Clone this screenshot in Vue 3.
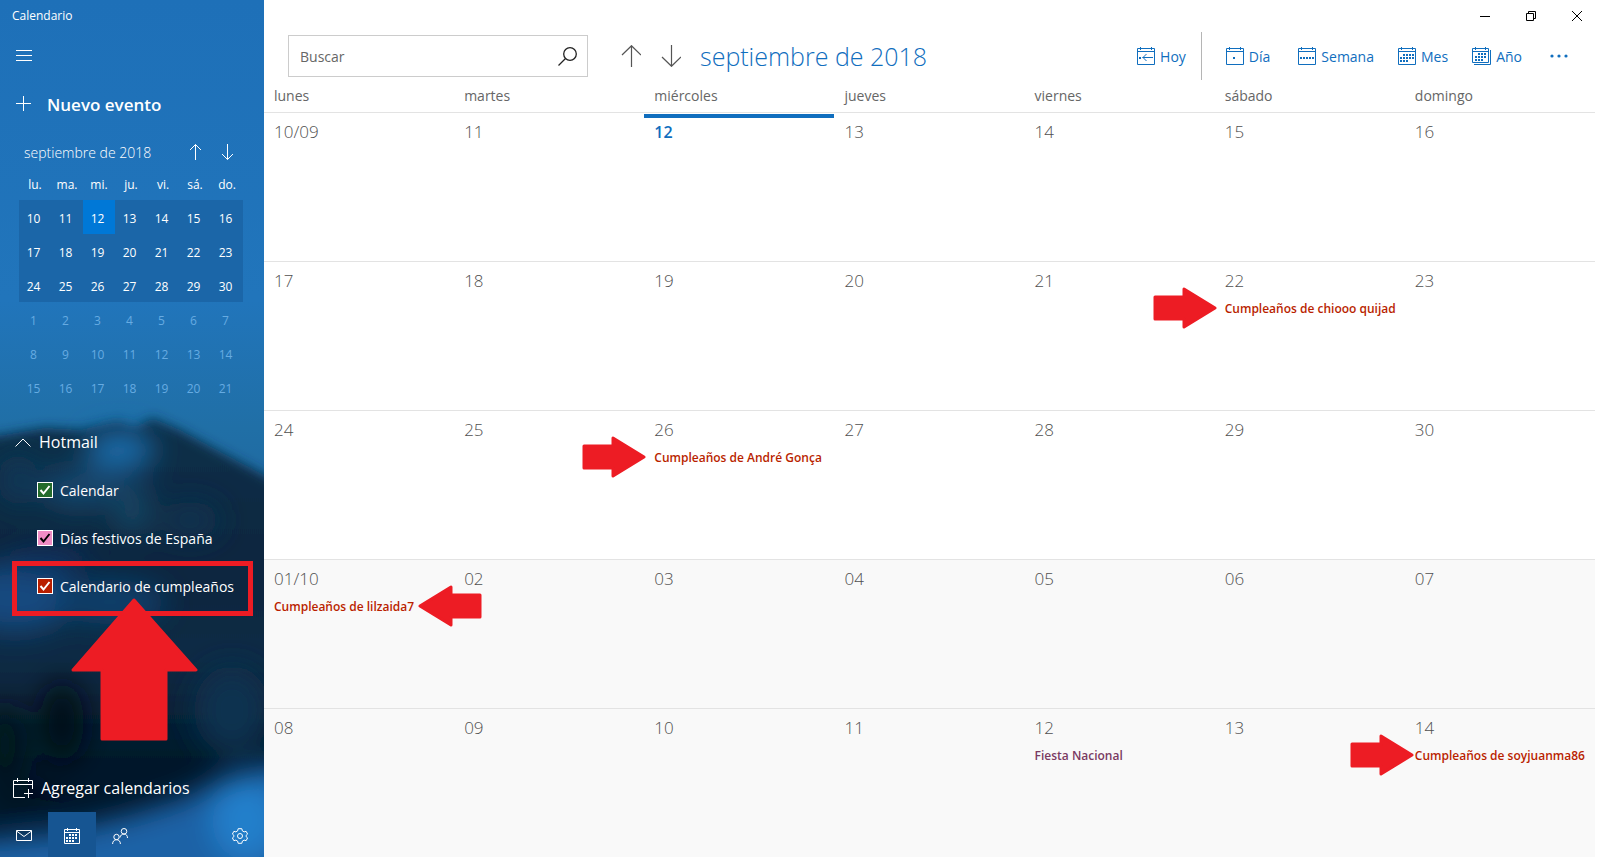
<script setup>
import { ref, computed } from "vue"

const search = ref("")
const activeView = ref("mes")

const weekdays = ["lunes", "martes", "miércoles", "jueves", "viernes", "sábado", "domingo"]
const shortWeekdays = ["lu.", "ma.", "mi.", "ju.", "vi.", "sá.", "do."]

const miniWeeks = [
  [10, 11, 12, 13, 14, 15, 16],
  [17, 18, 19, 20, 21, 22, 23],
  [24, 25, 26, 27, 28, 29, 30],
  [1, 2, 3, 4, 5, 6, 7],
  [8, 9, 10, 11, 12, 13, 14],
  [15, 16, 17, 18, 19, 20, 21]
]

const calendars = ref([
  { id: "calendar", name: "Calendar", color: "green", checked: true },
  { id: "holidays", name: "Días festivos de España", color: "pink", checked: true },
  { id: "birthdays", name: "Calendario de cumpleaños", color: "red", checked: true, marked: true }
])

const weeks = [
  ["10/09", "11", "12", "13", "14", "15", "16"],
  ["17", "18", "19", "20", "21", "22", "23"],
  ["24", "25", "26", "27", "28", "29", "30"],
  ["01/10", "02", "03", "04", "05", "06", "07"],
  ["08", "09", "10", "11", "12", "13", "14"]
]

const events = [
  { week: 1, day: 5, calendar: "birthdays", title: "Cumpleaños de chiooo quijad", arrow: "before" },
  { week: 2, day: 2, calendar: "birthdays", title: "Cumpleaños de André Gonça", arrow: "before" },
  { week: 3, day: 0, calendar: "birthdays", title: "Cumpleaños de lilzaida7", arrow: "after" },
  { week: 4, day: 4, calendar: "holidays", title: "Fiesta Nacional" },
  { week: 4, day: 6, calendar: "birthdays", title: "Cumpleaños de soyjuanma86", arrow: "close" }
]

const views = [
  { id: "dia", name: "Día", dots: [[7, 10]] },
  { id: "semana", name: "Semana", dots: [[2, 10], [5, 10], [8, 10], [11, 10], [14, 10]] },
  {
    id: "mes",
    name: "Mes",
    dots: [[5, 7], [8, 7], [11, 7], [14, 7], [2, 10], [5, 10], [8, 10], [11, 10], [14, 10], [2, 13], [5, 13], [8, 13]]
  },
  {
    id: "anio",
    name: "Año",
    dots: [[6, 6], [9, 6], [12, 6], [3, 9], [6, 9], [9, 9], [12, 9], [3, 12], [6, 12], [9, 12]]
  }
]

const visibleEvents = computed(() => {
  const active = calendars.value.filter((c) => c.checked).map((c) => c.id)
  return events.filter((e) => active.includes(e.calendar))
})

function eventsFor(week, day) {
  return visibleEvents.value.filter((e) => e.week === week && e.day === day)
}
</script>

<template>
  <div class="app">
    <aside class="sidebar">
      <svg class="backdrop" viewBox="0 0 264 857" preserveAspectRatio="none" aria-hidden="true">
        <defs>
          <linearGradient id="sky" x1="0" y1="0" x2="0" y2="1">
            <stop offset="0" stop-color="#1e70b8" />
            <stop offset="0.35" stop-color="#2175bb" />
            <stop offset="0.5" stop-color="#206fa6" />
            <stop offset="0.6" stop-color="#2068a0" />
          </linearGradient>
          <linearGradient id="rock" gradientUnits="userSpaceOnUse" x1="0" y1="415" x2="0" y2="857">
            <stop offset="0" stop-color="#0c3049" />
            <stop offset="0.35" stop-color="#08263f" />
            <stop offset="0.55" stop-color="#0a2b45" />
            <stop offset="0.78" stop-color="#04192a" />
            <stop offset="1" stop-color="#04182c" />
          </linearGradient>
          <filter id="soft" filterUnits="userSpaceOnUse" x="-100" y="300" width="500" height="700">
            <feGaussianBlur stdDeviation="6" />
          </filter>
          <filter id="softer" filterUnits="userSpaceOnUse" x="-100" y="300" width="500" height="700">
            <feGaussianBlur stdDeviation="14" />
          </filter>
        </defs>
        <rect width="264" height="857" fill="url(#sky)" />
        <path
          d="M-30 440 L10 434 L45 428 L80 430 L118 422 L135 428 L152 418 L180 430 L215 449 L264 475 L300 495 V900 H-30 Z"
          fill="url(#rock)"
          filter="url(#soft)"
        />
        <g filter="url(#softer)">
          <ellipse cx="120" cy="450" rx="34" ry="20" fill="#1f6ba8" />
          <ellipse cx="80" cy="488" rx="40" ry="20" fill="#13466d" />
          <ellipse cx="132" cy="508" rx="18" ry="28" fill="#134564" />
          <ellipse cx="18" cy="480" rx="20" ry="26" fill="#0e3857" />
          <ellipse cx="190" cy="520" rx="30" ry="18" fill="#0d3350" />
          <ellipse cx="15" cy="598" rx="60" ry="34" fill="#14497f" />
          <ellipse cx="110" cy="602" rx="56" ry="22" fill="#113f6c" />
          <ellipse cx="50" cy="560" rx="40" ry="14" fill="#0d2f5a" />
          <ellipse cx="62" cy="722" rx="22" ry="40" fill="#010a13" />
          <ellipse cx="5" cy="745" rx="20" ry="40" fill="#02141b" />
          <ellipse cx="232" cy="710" rx="38" ry="44" fill="#0c3150" />
          <ellipse cx="20" cy="800" rx="40" ry="10" fill="#030d1a" />
          <path d="M-40 842 L60 832 L130 815 L185 798 L225 776 L310 755 V920 H-40 Z" fill="#1a62a6" />
          <ellipse cx="246" cy="820" rx="34" ry="40" fill="#237fcb" />
        </g>
      </svg>

      <div class="app-title">Calendario</div>

      <button class="side-btn" type="button" aria-label="Menú">
        <svg width="16" height="16" viewBox="0 0 16 16" class="line-icon">
          <path d="M0 2.5H16M0 7.5H16M0 12.5H16" />
        </svg>
      </button>

      <button class="side-btn new-event" type="button">
        <svg width="16" height="16" viewBox="0 0 16 16" class="line-icon">
          <path d="M0 7.5H15M7.5 0V15" />
        </svg>
        Nuevo evento
      </button>

      <div class="mini-header">
        <span class="mini-month">septiembre de 2018</span>
        <button type="button" aria-label="Mes anterior">
          <svg width="12" height="16" viewBox="0 0 12 16" class="line-icon">
            <path d="M6.500 .5V16M1 6L6.500 .5L12 6" />
          </svg>
        </button>
        <button type="button" aria-label="Mes siguiente">
          <svg width="12" height="16" viewBox="0 0 12 16" class="line-icon">
            <path d="M6.500 0V15.500M1 10L6.500 15.500L12 10" />
          </svg>
        </button>
      </div>

      <table class="mini-calendar">
        <thead>
          <tr>
            <th v-for="d in shortWeekdays" :key="d">{{ d }}</th>
          </tr>
        </thead>
        <tbody>
          <tr v-for="(week, w) in miniWeeks" :key="w" :class="{ shown: w < 3 }">
            <td v-for="d in week" :key="d" :class="{ today: w === 0 && d === 12 }">{{ d }}</td>
          </tr>
        </tbody>
      </table>

      <button class="account" type="button">
        <svg width="16" height="9" viewBox="0 0 16 9" class="line-icon">
          <path d="M.5 8.500L8 1L15.500 8.500" />
        </svg>
        Hotmail
      </button>

      <div
        v-for="c in calendars"
        :key="c.id"
        class="calendar-item"
        :class="{ marked: c.marked }"
      >
        <label>
          <span class="check" :class="c.color">
            <input v-model="c.checked" type="checkbox" />
            <svg v-if="c.checked" width="16" height="16" viewBox="0 0 16 16">
              <path d="M3.500 8L6.500 11.500L12.500 4" />
            </svg>
          </span>
          {{ c.name }}
        </label>
        <svg v-if="c.marked" class="big-arrow" width="128" height="144" viewBox="0 0 128 144" aria-hidden="true">
          <path d="M63 2L125 72H95V141H31V72H2Z" />
        </svg>
      </div>

      <button class="add-calendars" type="button">
        <svg width="21" height="21" viewBox="0 0 21 21" class="line-icon">
          <path d="M12 19.500H.5V2.500H19.500V11M.5 6.500H19.500M4.500 0V4M15.500 0V4M15.500 11V20M11 15.500H20" />
        </svg>
        Agregar calendarios
      </button>

      <nav class="bottom-bar">
        <button type="button" aria-label="Correo">
          <svg width="16" height="16" viewBox="0 0 16 16" class="line-icon">
            <path d="M.5 2.500H15.500V12.500H.5ZM.5 3L8 8.500L15.500 3" />
          </svg>
        </button>
        <button type="button" class="current" aria-label="Calendario">
          <svg width="16" height="16" viewBox="0 0 16 16" class="line-icon">
            <path d="M.5 1.500H15.500V15.500H.5ZM.5 4.500H15.500M3.500 0V3M12.500 0V3" />
            <path class="dots" d="M5 6h2v2h-2zM8 6h2v2h-2zM11 6h2v2h-2zM2 9h2v2h-2zM5 9h2v2h-2zM8 9h2v2h-2zM11 9h2v2h-2zM2 12h2v2h-2zM5 12h2v2h-2zM8 12h2v2h-2z" />
          </svg>
        </button>
        <button type="button" aria-label="Contactos">
          <svg width="16" height="16" viewBox="0 0 16 16" class="line-icon people">
            <circle cx="4.500" cy="9" r="2.700" />
            <circle cx="12" cy="3.300" r="2.800" />
            <path d="M.6 16C.6 13.300 2.200 11.700 4.500 11.700S8.400 13.300 8.400 16M8 9.500C8.300 7.400 9.800 6.100 12 6.100S15.500 7.600 15.500 10" />
          </svg>
        </button>
        <button type="button" class="settings" aria-label="Configuración">
          <svg width="16" height="16" viewBox="0 0 16 16" class="line-icon">
            <circle cx="8" cy="8" r="2.500" />
            <path d="M6.200 .7H9.800L10.400 2.900L12.100 3.900L14.100 3.300L15.600 6.100L14 7.500V8.500L15.600 9.900L14.100 12.700L12.100 12.100L10.400 13.100L9.800 15.300H6.200L5.600 13.100L3.900 12.100L1.900 12.700L.4 9.900L2 8.500V7.500L.4 6.100L1.900 3.300L3.900 3.900L5.600 2.900Z" />
          </svg>
        </button>
      </nav>
    </aside>

    <main class="main">
      <div class="window-bar">
        <button type="button" aria-label="Minimizar">
          <svg width="10" height="10" viewBox="0 0 10 10"><path d="M0 5.500H10" /></svg>
        </button>
        <button type="button" aria-label="Restaurar">
          <svg width="10" height="10" viewBox="0 0 10 10"><path d="M.5 2.500H7.500V9.500H.5ZM2.500 2.500V.5H9.500V7.500H7.500" /></svg>
        </button>
        <button type="button" aria-label="Cerrar">
          <svg width="10" height="10" viewBox="0 0 10 10"><path d="M0 0L10 10M10 0L0 10" /></svg>
        </button>
      </div>

      <header class="toolbar">
        <form class="search" @submit.prevent>
          <input v-model="search" type="text" placeholder="Buscar" aria-label="Buscar" />
          <button type="submit" aria-label="Buscar eventos">
            <svg width="19" height="19" viewBox="0 0 19 19">
              <circle cx="12" cy="7" r="6.300" />
              <path d="M7.500 11.500L.5 18.500" />
            </svg>
          </button>
        </form>

        <div class="month-nav">
          <button type="button" aria-label="Semanas anteriores">
            <svg width="20" height="22" viewBox="0 0 20 22"><path d="M10.500 .5V22M1 10L10.500 .7L20 10" /></svg>
          </button>
          <button type="button" aria-label="Semanas siguientes">
            <svg width="20" height="22" viewBox="0 0 20 22"><path d="M10.500 0V21.500M1 12L10.500 21.300L20 12" /></svg>
          </button>
          <h1>septiembre de 2018</h1>
        </div>

        <div class="views">
          <button class="view-btn today-btn" type="button">
            <svg width="18" height="18" viewBox="0 0 18 18">
              <path d="M.5 1.500H17.500V17.500H.5ZM.5 4.500H17.500M3.500 0V3M14.500 0V3M5.500 10.500H16M9.500 7L6 10.500L9.500 14" />
              <rect x="2" y="10" width="2" height="2" />
            </svg>
            Hoy
          </button>
          <button
            v-for="v in views"
            :key="v.id"
            class="view-btn"
            :class="v.id"
            type="button"
            :aria-pressed="activeView === v.id"
            @click="activeView = v.id"
          >
            <svg v-if="v.id === 'anio'" width="19" height="18" viewBox="0 0 19 18">
              <path d="M.5 1.500H16.500V15.500H.5ZM.5 4.500H16.500M3.500 0V3M13.500 0V3M2 17.500H18.500V3" />
              <rect v-for="(p, i) in v.dots" :key="i" :x="p[0]" :y="p[1]" width="2" height="2" />
            </svg>
            <svg v-else width="18" height="18" viewBox="0 0 18 18">
              <path d="M.5 1.500H17.500V17.500H.5ZM.5 4.500H17.500M3.500 0V3M14.500 0V3" />
              <rect v-for="(p, i) in v.dots" :key="i" :x="p[0]" :y="p[1]" width="2" height="2" />
            </svg>
            {{ v.name }}
          </button>
          <button class="more" type="button" aria-label="Más">
            <svg width="18" height="4" viewBox="0 0 18 4">
              <circle cx="2" cy="2" r="1.600" />
              <circle cx="9" cy="2" r="1.600" />
              <circle cx="16" cy="2" r="1.600" />
            </svg>
          </button>
        </div>
      </header>

      <table class="month">
        <thead>
          <tr>
            <th v-for="d in weekdays" :key="d">{{ d }}</th>
          </tr>
        </thead>
        <tbody>
          <tr v-for="(week, w) in weeks" :key="w" :class="{ other: w > 2 }">
            <td v-for="(d, i) in week" :key="i" :class="{ today: w === 0 && i === 2 }">
              <div class="day-number">{{ d }}</div>
              <div v-for="e in eventsFor(w, i)" :key="e.title" class="event" :class="e.calendar">
                <span class="event-title">{{ e.title }}</span>
                <svg
                  v-if="e.arrow"
                  class="arrow"
                  :class="e.arrow"
                  width="64"
                  height="42"
                  viewBox="0 0 64 42"
                  aria-hidden="true"
                >
                  <path v-if="e.arrow === 'after'" d="M2 21L33 2V10H62V32H33V40Z" />
                  <path v-else d="M62 21L31 2V10H2V32H31V40Z" />
                </svg>
              </div>
            </td>
          </tr>
        </tbody>
      </table>
    </main>
  </div>
</template>

<style>
body {
  margin: 0;
  background: #fff;
}
</style>

<style scoped>
.app {
  display: flex;
  min-height: 100vh;
  font-family: "Open Sans", "Noto Sans", sans-serif;
  color: #666;
}

button {
  display: flex;
  align-items: center;
  padding: 0;
  border: none;
  background: none;
  font: inherit;
  color: inherit;
  cursor: pointer;
}

svg {
  display: block;
  flex: none;
  fill: none;
}

/* Sidebar */
.sidebar {
  position: relative;
  z-index: 0;
  display: flex;
  flex-direction: column;
  flex: none;
  width: 264px;
  color: #fff;
}

.backdrop {
  position: absolute;
  inset: 0;
  z-index: -1;
  width: 100%;
  height: 100%;
  overflow: hidden;
}

.line-icon {
  stroke: currentColor;
}

.line-icon .dots {
  fill: currentColor;
  stroke: none;
}

.app-title {
  padding-left: 12px;
  font-size: 12px;
  line-height: 32px;
}

.side-btn {
  height: 48px;
  padding-left: 16px;
}

.new-event {
  gap: 15px;
  font-size: 17px;
  font-weight: 600;
}

.mini-header {
  display: flex;
  align-items: center;
  height: 48px;
  padding: 0 21px 0 24px;
}

.mini-header button {
  justify-content: center;
  width: 32px;
  height: 32px;
}

.mini-month {
  flex: 1;
  font-size: 14px;
  font-weight: 300;
}

.mini-calendar {
  width: 224px;
  margin-left: 19px;
  border-collapse: collapse;
  table-layout: fixed;
  font-size: 12px;
  text-align: center;
}

.mini-calendar th {
  height: 24px;
  padding: 0;
  font-weight: 400;
  line-height: 18px;
  vertical-align: top;
}

.mini-calendar td {
  box-sizing: border-box;
  height: 34px;
  padding: 2px 3px 0 0;
  color: #66abe2;
}

.mini-calendar .shown td {
  background: #1b66a8;
  color: #fff;
}

.mini-calendar .shown .today {
  background: #0078d7;
}

.account {
  gap: 8px;
  height: 48px;
  margin-top: 14px;
  padding-left: 15px;
  font-size: 16px;
}

.calendar-item {
  position: relative;
  height: 48px;
}

.calendar-item label {
  display: flex;
  align-items: center;
  gap: 7px;
  height: 100%;
  padding-left: 37px;
  font-size: 14px;
  white-space: nowrap;
}

.calendar-item.marked::before {
  content: "";
  position: absolute;
  inset: -1px 11px -6px 12px;
  border: 5px solid #ed1c24;
  pointer-events: none;
}

.check {
  position: relative;
  width: 16px;
  height: 16px;
}

.check input {
  display: block;
  box-sizing: border-box;
  width: 16px;
  height: 16px;
  margin: 0;
  border: 1px solid #fff;
  background: var(--box);
  appearance: none;
}

.check svg {
  position: absolute;
  inset: 0;
  stroke: var(--tick);
  stroke-width: 2;
  pointer-events: none;
}

.check.green {
  --box: #236b2b;
  --tick: #fff;
}

.check.pink {
  --box: #f08cc4;
  --tick: #000;
}

.check.red {
  --box: #b91f00;
  --tick: #fff;
}

.big-arrow {
  position: absolute;
  top: 36px;
  left: 71px;
  pointer-events: none;
}

.big-arrow path,
.arrow path {
  fill: #ed1c24;
  stroke: #ed1c24;
  stroke-width: 3;
  stroke-linejoin: round;
}

.add-calendars {
  gap: 7px;
  height: 48px;
  margin-top: auto;
  padding-left: 13px;
  font-size: 16px;
}

.bottom-bar {
  display: flex;
  height: 45px;
}

.bottom-bar button {
  justify-content: center;
  width: 48px;
  padding-top: 3px;
}

.bottom-bar .current {
  background: #165592;
}

.bottom-bar .settings {
  margin-left: auto;
}

/* Window buttons */
.main {
  display: flex;
  flex: 1;
  flex-direction: column;
  min-width: 0;
}

.window-bar {
  display: flex;
  justify-content: flex-end;
  height: 32px;
}

.window-bar button {
  justify-content: center;
  width: 46px;
}

.window-bar svg {
  stroke: #000;
}

/* Toolbar */
.toolbar {
  display: flex;
  align-items: center;
  height: 48px;
  padding: 0 32px 0 24px;
}

.search {
  display: flex;
  box-sizing: border-box;
  width: 300px;
  height: 42px;
  border: 1px solid #ccc;
}

.search input {
  flex: 1;
  min-width: 0;
  padding: 0 11px;
  border: none;
  outline: none;
  background: none;
  font: inherit;
  font-size: 14px;
  color: #666;
}

.search input::placeholder {
  color: #666;
}

.search button {
  justify-content: center;
  width: 40px;
}

.search svg {
  stroke: #222;
  stroke-width: 1.3;
}

.month-nav {
  display: flex;
  align-items: center;
  margin-left: 23px;
}

.month-nav button {
  justify-content: center;
  width: 40px;
  height: 40px;
}

.month-nav svg {
  stroke: #555;
  stroke-width: 1.2;
}

.month-nav h1 {
  margin: 0 0 0 9px;
  font-size: 25px;
  font-weight: 300;
  line-height: 40px;
  color: #106ebe;
  white-space: nowrap;
}

.views {
  display: flex;
  align-items: center;
  height: 100%;
  margin-left: auto;
  color: #106ebe;
}

.view-btn {
  gap: 5px;
  height: 100%;
  margin-right: 24px;
  font-size: 14px;
}

.view-btn.dia,
.view-btn.anio {
  margin-right: 28px;
}

.view-btn svg {
  stroke: #106ebe;
}

.view-btn rect,
.more circle {
  fill: #106ebe;
  stroke: none;
}

.today-btn {
  padding-right: 15px;
  border-right: 1px solid #b5b5b5;
}

/* Month grid */
.month {
  display: flex;
  flex: 1;
  flex-direction: column;
  margin-right: 5px;
}

.month tbody {
  display: flex;
  flex: 1;
  flex-direction: column;
}

.month tr {
  display: grid;
  grid-template-columns: repeat(7, minmax(0, 1fr));
}

.month tbody tr {
  flex: 1;
  border-top: 1px solid #e3e3e3;
}

.month .other {
  background: #f9f9f9;
}

.month th {
  height: 32px;
  padding: 0 0 0 10px;
  font-size: 14px;
  font-weight: 400;
  line-height: 32px;
  text-align: left;
}

.month td {
  position: relative;
  padding: 7px 9px 0 10px;
}

.month .today::before {
  content: "";
  position: absolute;
  top: 1px;
  right: 0;
  left: 0;
  height: 4px;
  background: #106ebe;
}

.day-number {
  font-size: 17px;
  font-weight: 300;
  line-height: 24px;
  color: #505050;
}

.today .day-number {
  font-size: 16px;
  font-weight: 600;
  color: #106ebe;
}

.event {
  position: relative;
  width: fit-content;
  max-width: 100%;
  margin-top: 6px;
  font-size: 12px;
  font-weight: 600;
  line-height: 20px;
}

.event-title {
  display: block;
  overflow: hidden;
  white-space: nowrap;
}

.birthdays {
  color: #b91f00;
}

.holidays {
  color: #7a3a62;
}

.arrow {
  position: absolute;
  top: -12px;
  z-index: 1;
}

.arrow.before {
  right: 100%;
  margin-right: 8px;
}

.arrow.close {
  right: 100%;
  margin-right: 1px;
}

.arrow.after {
  left: 100%;
  margin-left: 4px;
}
</style>
